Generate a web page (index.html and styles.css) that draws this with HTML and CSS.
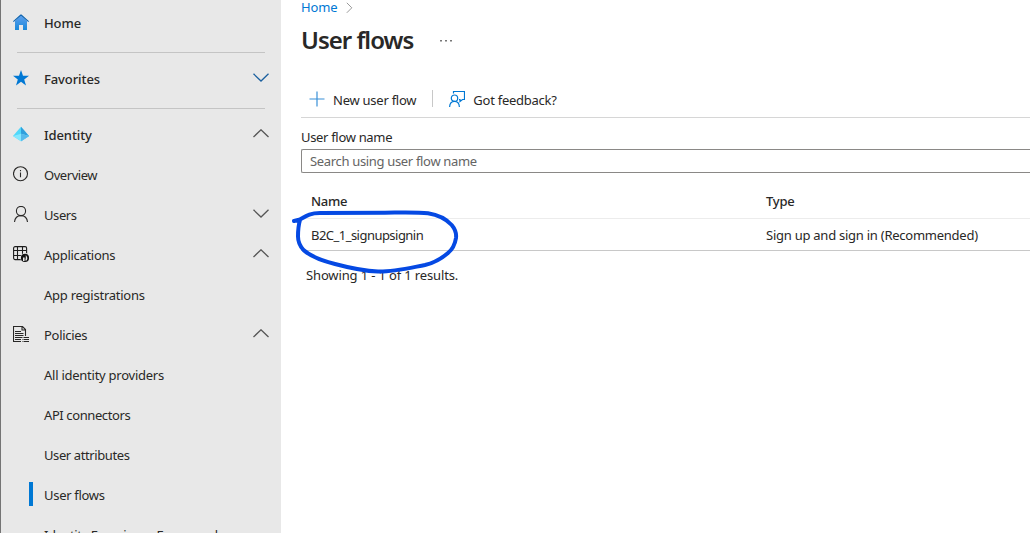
FILE: index.html
```html
<!DOCTYPE html>
<html lang="en">
<head>
<meta charset="utf-8">
<title>User flows</title>
<link rel="stylesheet" href="styles.css">
</head>
<body>
<div class="app">
  <nav class="sidebar">
    <a class="item top home"><svg class="icon" viewBox="0 0 16 16"><defs><linearGradient id="house" x2="0" y2="1"><stop offset="0" stop-color="#5ea0ef"/><stop offset="1" stop-color="#1988d9"/></linearGradient></defs><path d="M2 7 8 1.5 14 7v9h-4v-5H6v5H2z" fill="url(#house)"/><path d="M0 7.2 7.5.4h1L16 7.2l-.7.8L8 1.8.7 8z" fill="#0b62ae"/></svg><span class="label">Home</span></a>
    <hr class="rule">
    <a class="item top favorites"><svg class="icon" viewBox="0 0 16 16"><path d="m8 0 2 5.800h6L11.200 9.400 13 15.500 8 11.800 3 15.500 4.800 9.400 0 5.800h6z" fill="#0078d4"/></svg><span class="label">Favorites</span><svg class="chevron blue" viewBox="0 0 16 9"><path d="m.5.8 7.500 7.200L15.500.8"/></svg></a>
    <hr class="rule">
    <a class="item top identity"><svg class="icon" viewBox="0 0 16 16"><path d="M8 .8 0 10l8 5.300 8-5.300z" fill="#50d8fa"/><path d="M8 .8v14.500l8-5.300z" fill="#319fdc"/><path d="M8 7.800 0 10l8 5.300 8-5.300z" fill="#84e8ff"/><path d="M8 7.800v7.500l8-5.300z" fill="#58b9eb"/></svg><span class="label">Identity</span><svg class="chevron" viewBox="0 0 16 9"><path d="M.5 8 8 .8 15.500 8"/></svg></a>
    <a class="item overview"><svg class="icon line" viewBox="0 0 16 16"><circle cx="7.500" cy="7.700" r="7"/><path d="M7.500 6.500v4.800M7.500 4v1.300"/></svg><span class="label">Overview</span></a>
    <a class="item users"><svg class="icon line" viewBox="0 0 16 16"><circle cx="8" cy="5" r="4.600"/><path d="M1.500 16C2 11.500 4.700 9.600 8 9.600s6 1.900 6.500 6.400"/></svg><span class="label">Users</span><svg class="chevron" viewBox="0 0 16 9"><path d="m.5.8 7.500 7.200L15.500.8"/></svg></a>
    <a class="item applications"><svg class="icon line bold" viewBox="0 0 16 16"><rect x=".6" y=".6" width="13" height="13" rx="1.500"/><path d="M4.500 1v12M9.500 1v12M1 4.500h12M1 9.500h12"/><circle cx="12" cy="11.700" r="4.700" fill="#e8e8e8" stroke="none"/><circle cx="12" cy="11.900" r="4.100" fill="#111" stroke="none"/><path d="M12.800 9c1.600 2 2.200 3.500.8 5.500h-1.400c.8-2 .5-3.500.6-5.500zM10 11.500h1.600v3.500H10z" fill="#e8e8e8" stroke="none"/></svg><span class="label">Applications</span><svg class="chevron" viewBox="0 0 16 9"><path d="M.5 8 8 .8 15.500 8"/></svg></a>
    <a class="item"><span class="label sub">App registrations</span></a>
    <a class="item policies"><svg class="icon line" viewBox="0 0 16 16"><path d="M8 15.500H.5V.5h9l3 3V10M9 .5V4h3.500M2 5.500h6M2 7.500h8.500M2 9.500h8.500M2 11.500h7M2 13.500h6M9.500 11.500h1M11 11.500h5M9.500 13.500h1M11 13.500h5M9.500 15.500h1M11 15.500h5"/></svg><span class="label">Policies</span><svg class="chevron" viewBox="0 0 16 9"><path d="M.5 8 8 .8 15.500 8"/></svg></a>
    <a class="item"><span class="label sub">All identity providers</span></a>
    <a class="item tight"><span class="label sub">API connectors</span></a>
    <a class="item tight"><span class="label sub">User attributes</span></a>
    <a class="item selected"><span class="marker"></span><span class="label">User flows</span></a>
    <a class="item tighter"><span class="label sub">Identity Experience Framework</span></a>
  </nav>
  <main class="content">
    <div class="crumbs"><a class="crumb">Home</a><svg class="crumb-arrow" viewBox="0 0 7 12"><path d="m.8.8 5 5-5 5"/></svg></div>
    <header class="heading"><h1>User flows</h1><svg class="more" viewBox="0 0 12 2"><path d="M0 0h2v1.500H0zM5 0h2v1.500H5zM10 0h2v1.500h-2z"/></svg></header>
    <div class="toolbar">
      <a class="command"><svg class="tool-icon" viewBox="0 0 16 16"><path d="M8 .5v15M.5 8h15"/></svg><span>New user flow</span></a>
      <span class="separator"></span>
      <a class="command feedback"><svg class="tool-icon strong" viewBox="0 0 16 16"><path d="M4.500 2.500v-2h11v8h-2l-2.500 2V8.500H10"/><circle cx="5.500" cy="7.200" r="3.200"/><path d="M.6 16c.2-3.700 2.200-5.600 4.900-5.600s4.700 1.900 4.900 5.600"/></svg><span>Got feedback?</span></a>
    </div>
    <label class="field-label" for="search">User flow name</label>
    <div class="search" id="search">Search using user flow name</div>
    <div class="table">
      <div class="row head"><span>Name</span><span>Type</span></div>
      <div class="row"><span class="flow">B2C_1_signupsignin</span><span class="type">Sign up and sign in (Recommended)</span></div>
    </div>
    <div class="results">Showing 1 - 1 of 1 results.</div>
    <svg class="annotation" viewBox="0 0 180 74"><path d="M8 17 14 15.500C20 12 24 9 34 9L99 8.700C118 8.500 131 8 142 9.300 153 11 161 16 165.700 21 169 25 170.500 30 170 34 169 40 167 45 162 49 155 55 148 59 139 61 123 64 106 68 92 67.500 77 67 64 64 49 60 37 57 24 52 17.500 46 13 41 12 37 12 32.500 12 26 12.500 21 14 16"/></svg>
  </main>
</div>
</body>
</html>
```

FILE: styles.css
```css
* { box-sizing: border-box; }
body {
  margin: 0;
  overflow: hidden;
  background: #fff;
  color: #292827;
  font: 13px/18px "Noto Sans", "Open Sans", sans-serif;
  letter-spacing: -0.25px;
}
.app { display: flex; height: 533px; overflow: hidden; }

.sidebar {
  width: 281px;
  flex: none;
  background: #e8e8e8;
  border-left: 1px solid #747474;
}
.item { display: flex; align-items: center; height: 40px; padding: 0 12px; }
.top { font-weight: 500; letter-spacing: -0.1px; }
.home { height: 52px; padding-bottom: 6px; }
.favorites { height: 55px; padding-bottom: 3px; }
.identity { height: 46px; padding-top: 6px; }
.overview { letter-spacing: -0.45px; }
.users { letter-spacing: -0.4px; }
.applications, .policies { letter-spacing: -0.3px; }
.tight { letter-spacing: -0.4px; }
.tighter { letter-spacing: -0.43px; }
.selected { letter-spacing: -0.3px; }
.rule { width: 248px; height: 1px; margin: 0 0 0 16px; border: 0; background: #c4c4c4; }
.icon { width: 16px; height: 16px; flex: none; margin: -2px 15px 0 0; }
.line { fill: none; stroke: #292827; stroke-width: 1.1; }
.bold { stroke: #1c1c1c; stroke-width: 1.1; }
.chevron { width: 16px; height: 9px; margin: -3px 0 0 auto; fill: none; stroke: #555; stroke-width: 1.3; }
.blue { stroke: #1b609f; }
.sub { margin-left: 31px; }
.marker { width: 4px; height: 24px; margin: -2px 11px 0 16px; background: #0078d4; }

.content { position: relative; flex: 1; min-width: 0; padding-left: 20px; }
.crumbs { display: flex; align-items: center; height: 14px; gap: 8px; letter-spacing: -0.1px; color: #0078d4; }
.crumb-arrow { width: 7px; height: 12px; margin-top: 1px; fill: none; stroke: #999; }
.heading { display: flex; align-items: center; height: 52px; gap: 27px; }
h1 { margin: 0; font-size: 24px; line-height: 32px; font-weight: 600; letter-spacing: -1px; }
.more { width: 12px; height: 2px; margin-top: 2px; fill: #777; }
.toolbar { display: flex; align-items: center; height: 52px; padding: 16px 0 0 8px; border-bottom: 1px solid #d6d6d6; }
.command { display: flex; align-items: center; gap: 8px; }
.tool-icon { width: 16px; height: 16px; margin-top: -1px; fill: none; stroke: #3990d8; stroke-width: 1.2; }
.strong { stroke: #0078d4; }
.separator { width: 1px; height: 17px; margin: -2px 16px 0; background: #c8c8c8; }
.field-label { display: block; padding-top: 10px; height: 31px; letter-spacing: -0.32px; }
.search { height: 24px; padding: 2px 8px; border: 1px solid #8a8886; border-right: 0; border-radius: 2px 0 0 2px; letter-spacing: -0.33px; color: #646464; }
.row {
  display: grid;
  grid-template-columns: 455px 1fr;
  align-items: center;
  height: 32px;
  padding: 1px 0 0 10px;
  border-bottom: 1px solid #c8c8c8;
}
.head { height: 46px; padding-top: 10px; font-weight: 500; border-color: #ececec; }
.flow { letter-spacing: -0.53px; }
.results { padding: 15px 0 0 5px; letter-spacing: -0.14px; }
.annotation {
  position: absolute;
  left: 5px;
  top: 204px;
  width: 180px;
  height: 74px;
  fill: none;
  stroke: #0549e3;
  stroke-width: 4;
  stroke-linecap: round;
  stroke-linejoin: round;
}
```
